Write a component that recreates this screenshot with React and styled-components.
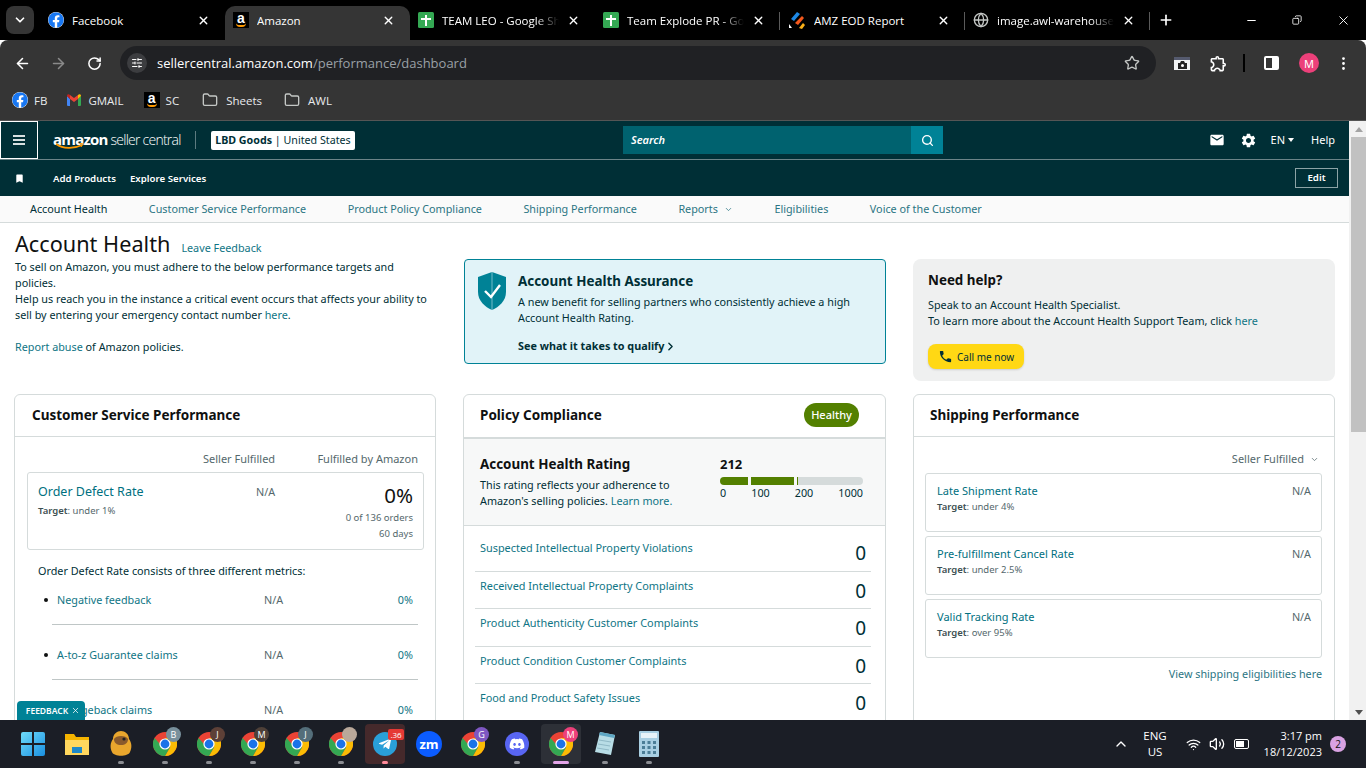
import React from "react";
import styled, { createGlobalStyle } from "styled-components";
import { ArrowLeft, ArrowRight, RotateCw, X, Plus, Minus, Star, Folder, ChevronDown, ChevronRight, ChevronUp, Search, Copy, Wifi, Volume2, SlidersHorizontal, EllipsisVertical, Globe } from "lucide-react";
import { MdEmail, MdSettings, MdBookmark, MdPhone, MdOutlineExtension } from "react-icons/md";
import { FaFacebook, FaDiscord, FaTelegramPlane } from "react-icons/fa";

const Global = createGlobalStyle`
  html, body { margin: 0; padding: 0; width: 1366px; height: 768px; overflow: hidden; background: #fff; }
  * { box-sizing: border-box; }
  body { font-family: "Noto Sans", "Open Sans", sans-serif; }
`;
const Shell = styled.div`width:1366px;height:768px;display:flex;flex-direction:column;overflow:hidden;`;

/* ---------- browser chrome ---------- */
const TabStrip = styled.div`height:40px;background:#000;display:flex;align-items:flex-start;padding:6px 0 0 6px;color:#fff;font-family:"Open Sans",sans-serif;font-size:11.5px;`;
const TabMenu = styled.div`width:28px;height:28px;border-radius:8px;background:#353535;display:flex;align-items:center;justify-content:center;margin-right:6px;`;
const Tab = styled.div`
  width:185px;height:34px;flex:none;display:flex;align-items:center;padding:0 15px 6px 8px;gap:8px;position:relative;
  ${p => p.$active ? "background:#353535;border-radius:10px 10px 0 0;" : ""}
  ${p => p.$sep ? `&::after{content:"";position:absolute;right:0;top:6px;width:1px;height:18px;background:#5a5a5a;}` : ""}
`;
const TabTitle = styled.span`flex:1;white-space:nowrap;overflow:hidden;-webkit-mask-image:${p => p.$fade ? "linear-gradient(90deg,#000 80%,transparent)" : "none"};`;
const NewTab = styled.div`width:28px;height:28px;display:flex;align-items:center;justify-content:center;margin-left:2px;`;
const WindowControls = styled.div`margin-left:auto;display:flex;height:28px;align-items:center;`;
const WindowButton = styled.div`width:46px;display:flex;align-items:center;justify-content:center;`;

const Toolbar = styled.div`height:46px;background:#353535;border-radius:8px 8px 0 0;display:flex;align-items:center;padding:0 0 0 10px;color:#e8eaed;`;
const NavIcon = styled.div`width:36px;display:flex;justify-content:center;color:${p => p.$dim ? "#8a8a8a" : "#fff"};margin-left:${p => p.$ml || 0}px;`;
const Omnibox = styled.div`width:1036px;height:34px;margin:0 0 0 8px;border-radius:17px;background:#202124;display:flex;align-items:center;padding:0 16px 0 7px;font-family:"Open Sans",sans-serif;font-size:13px;`;
const SiteInfo = styled.div`width:20px;height:20px;border-radius:50%;background:#3c3d40;display:flex;align-items:center;justify-content:center;margin-right:10px;color:#fff;`;
const Host = styled.span`color:#fff;`;
const Path = styled.span`color:#9aa0a6;`;
const OmniStar = styled.div`margin-left:auto;display:flex;color:#c4c7c5;`;
const ToolIcons = styled.div`display:flex;align-items:center;margin-left:8px;color:#fff;`;
const ToolIcon = styled.div`width:${p => p.$w || 36}px;display:flex;justify-content:center;`;
const ToolSep = styled.div`width:2px;height:18px;background:#000;margin:0 8px 0 7px;`;
const Avatar = styled.div`width:20px;height:20px;border-radius:50%;background:#ec407a;color:#fff;font-size:11px;display:flex;align-items:center;justify-content:center;margin:0 8px 0 10px;`;
const Camera = styled.div`width:16px;height:13px;background:#f1f3f4;border-top:3px solid #555a6e;display:flex;align-items:center;justify-content:center;`;
const SidePanel = styled.div`width:15px;height:14px;border:2px solid #fff;border-radius:2px;background:linear-gradient(90deg,transparent 55%,#fff 55%);`;

const Bookmarks = styled.div`height:34px;background:#353535;display:flex;align-items:center;padding:0 0 6px 12px;color:#e8eaed;font-family:"Open Sans",sans-serif;font-size:11.5px;`;
const Bookmark = styled.div`display:flex;align-items:center;gap:${p => p.$gap || 6}px;margin-right:${p => p.$mr}px;`;

const FavAmazon = styled.div`width:16px;height:16px;background:#000;color:#fff;font:700 14px/13px "Liberation Sans",sans-serif;text-align:center;position:relative;flex:none;
  &::after{content:"";position:absolute;left:3px;right:3px;bottom:1px;height:2px;border-bottom:2px solid #f90;border-radius:0 0 8px 8px;}`;

const Sheets = () => <svg width="16" height="16" viewBox="0 0 16 16"><rect width="16" height="16" rx="1.5" fill="#34a853"/><path d="M7 3h2v3h4v2H9v6H7V8H3V6h4z" fill="#fff"/></svg>;
const Gmail = () => <svg width="14" height="12" viewBox="0 0 14 12"><path d="M0 2v9a1 1 0 0 0 1 1h2V5z" fill="#4285f4"/><path d="M14 2v9a1 1 0 0 1-1 1h-2V5z" fill="#34a853"/><path d="M3 5V1l4 3 4-3v4L7 8z" fill="#ea4335"/><path d="M0 2c0-2 2-2 3-1v4z" fill="#c5221f"/><path d="M14 2c0-2-2-2-3-1v4z" fill="#fbbc04"/></svg>;
const AmzEod = () => <svg width="18" height="18" viewBox="0 0 18 18"><path d="M3 8l6-7 3 2-6 7z" fill="#1e88e5"/><path d="M7 12l7-7 2 2-6 7z" fill="#f4581c"/><path d="M11 17l4-5 2 2-3 4z" fill="#fbb017"/><path d="M1 13l3 4H1z" fill="#fff"/></svg>;
const ChromeLogo = ({ size = 24 }) => (
  <svg width={size} height={size} viewBox="0 0 24 24">
    <circle cx="12" cy="12" r="12" fill="#ea4335"/>
    <path d="M12 24A12 12 0 0 0 22.4 6H12l5.2 9z" fill="#fbbc04"/>
    <path d="M12 24l5.2-9H12a6 6 0 0 1-5.2-3L1.6 6A12 12 0 0 0 12 24z" fill="#34a853"/>
    <circle cx="12" cy="12" r="5.600" fill="#fff"/><circle cx="12" cy="12" r="4.400" fill="#1a73e8"/>
  </svg>
);

/* ---------- seller central ---------- */
const Main = styled.div`height:600px;display:flex;`;
const Page = styled.div`flex:1;min-width:0;position:relative;overflow:hidden;background:#fff;color:#002f36;font-size:10.8px;line-height:16px;`;
const Scroll = styled.div`width:17px;background:#f1f1f1;border-top:1px solid #555;display:flex;flex-direction:column;align-items:flex-end;`;
const ScrollBtn = styled.div`width:15px;height:16px;display:flex;align-items:center;justify-content:center;`;
const Tri = styled.div`width:0;height:0;border-left:4px solid transparent;border-right:4px solid transparent;${p => p.$up ? "border-bottom:5px solid #a3a3a3;" : "border-top:5px solid #505050;"}`;
const Thumb = styled.div`width:15px;height:295px;background:#c1c1c1;`;
const ScrollFill = styled.div`flex:1;`;

const TopNav = styled.div`height:40px;background:#002f36;border-top:1px solid #555;border-bottom:1px solid #6c8488;display:flex;align-items:center;color:#fff;position:relative;`;
const Burger = styled.div`width:38px;height:38px;border:1px solid #fff;display:flex;flex-direction:column;gap:2px;align-items:center;justify-content:center;flex:none;`;
const BurgerLine = styled.span`width:12px;height:2px;background:#d8e0e1;`;
const Logo = styled.div`margin-left:15px;position:relative;display:flex;align-items:baseline;gap:3px;height:24px;color:#fff;white-space:nowrap;`;
const LogoMain = styled.span`font:700 15px/22px "Open Sans",sans-serif;letter-spacing:-.8px;`;
const LogoSub = styled.span`font:300 14px/22px "Open Sans",sans-serif;letter-spacing:-.75px;`;
const Smile = styled.svg`position:absolute;left:2px;top:15px;`;
const NavDivider = styled.div`width:1px;height:18px;background:#5d7b80;margin:0 15px 0 14px;`;
const Store = styled.div`height:19px;background:#fff;color:#002f36;border-radius:2px;padding:0 4.500px;font-size:10.7px;line-height:19px;white-space:nowrap;`;
const StoreName = styled.b`font-weight:700;`;
const SearchBox = styled.div`position:absolute;left:623px;top:5px;width:320px;height:28px;display:flex;`;
const SearchInput = styled.div`flex:1;background:#00626f;color:#fff;font-style:italic;font-weight:600;font-size:11px;line-height:28px;padding-left:8px;`;
const SearchBtn = styled.div`width:32px;background:#008296;display:flex;align-items:center;justify-content:center;`;
const NavRight = styled.div`margin-left:auto;display:flex;align-items:center;padding-right:14px;font-size:11px;`;
const NavLabel = styled.span`display:flex;align-items:center;gap:3px;margin-left:${p => p.$ml}px;`;
const Caret = styled.span`width:0;height:0;border-left:3.5px solid transparent;border-right:3.5px solid transparent;border-top:4px solid #fff;`;

const ActionBar = styled.div`height:36px;background:#002f36;display:flex;align-items:center;padding:1px 11px 0 14px;color:#fff;font-size:9.7px;font-weight:600;`;
const ActionLink = styled.span`margin-left:${p => p.$ml}px;`;
const EditBtn = styled.div`margin:-1px 0 0 auto;width:43px;height:20px;border:1px solid #8ca3a6;text-align:center;line-height:18px;`;

const SubNav = styled.div`height:27px;background:#fafafa;border-bottom:1px solid #d5dbdb;display:flex;align-items:center;padding:0 0 0 30px;gap:41.5px;font-size:10.8px;white-space:nowrap;`;
const SubItem = styled.span`color:${p => p.$on ? "#002f36" : "#2b7583"};display:flex;align-items:center;gap:6px;`;

const Content = styled.div`padding:9px 14px 0;`;
const Top = styled.div`display:grid;grid-template-columns:422px 423px 422px;column-gap:27px;height:162px;`;
const Intro = styled.div`padding-left:1px;`;
const TitleRow = styled.div`display:flex;align-items:baseline;gap:11px;height:27px;`;
const H1 = styled.h1`margin:0;font-size:21.700px;font-weight:400;line-height:24px;color:#0f1111;`;
const A = styled.span`color:#0f7585;font-weight:${p => p.$bold ? 700 : 400};`;
const P = styled.p`margin:0;`;
const Gap = styled.div`height:${p => p.$h}px;`;

const Assurance = styled.div`margin:27px 0 0 1px;height:105px;background:#e1f3f8;border:1px solid #008296;border-radius:4px;display:flex;padding:12px 12px 0 12px;gap:11px;`;
const AssBody = styled.div`flex:1;`;
const H3 = styled.div`font-size:13.4px;font-weight:700;color:${p => p.$c || "#002f36"};line-height:18px;`;
const Qualify = styled.div`margin-top:12px;font-weight:700;display:flex;align-items:center;gap:0;`;

const Help = styled.div`margin-top:27px;height:122px;background:#eff0f0;border-radius:8px;padding:12px 15px;`;
const CallBtn = styled.div`margin-top:15px;width:96px;height:25px;border-radius:8px;background:#ffd814;display:flex;align-items:center;padding-left:10px;gap:4px;font-size:10px;box-shadow:0 1px 2px rgba(15,17,17,.15);`;

const Cards = styled.div`display:grid;grid-template-columns:422px 423px 422px;column-gap:27px;`;
const Card = styled.div`height:420px;border:1px solid #d5dbdb;border-radius:6px 6px 0 0;`;
const CardHead = styled.div`height:${p => p.$thick ? 44 : 42}px;border-bottom:${p => p.$thick ? "2px" : "1px"} solid #d5dbdb;display:flex;align-items:center;justify-content:space-between;padding:0 26px 2px ${p => p.$pl || 16}px;`;
const CardTitle = styled.div`font-size:13.5px;font-weight:700;color:#0f1111;`;
const Pill = styled.div`width:55px;height:24px;border-radius:12px;background:#538000;color:#fff;font-size:11px;font-weight:500;text-align:center;line-height:24px;`;

const ColHead = styled.div`display:grid;grid-template-columns:1fr 73px 142px;padding:0 17px 0 0;color:#54686c;margin-top:14px;font-size:11px;white-space:nowrap;`;
const Right = styled.div`text-align:right;padding-right:${p => p.$pr || 0}px;`;
const Box = styled.div`border:1px solid #d5dbdb;border-radius:3px;`;
const OdrBox = styled(Box)`height:78px;display:grid;grid-template-columns:218px 60px 1fr;padding:10px 10px 0 10px;margin:5px 11px 0 12px;`;
const MetricName = styled.div`color:#00707f;font-size:${p => p.$s || 12.5}px;line-height:17px;`;
const Target = styled.div`font-size:9.5px;line-height:16px;margin-top:${p => p.$mt}px;color:#54686c;`;
const TargetKey = styled.b`color:#3d4f52;font-weight:600;`;
const Big = styled.div`font-size:20.5px;line-height:27px;color:#0f1111;margin:-1px 0 1px;`;
const Small = styled.div`font-size:9.5px;color:#54686c;`;
const Muted = styled.div`color:#54686c;line-height:17px;`;
const Lead = styled.div`padding:13px 0 13px 23px;`;
const SubRow = styled.div`margin:0 17px 22px 37px;height:33px;border-bottom:${p => p.$last ? "none" : "1px solid #bfc6c6"};display:grid;grid-template-columns:207px 60px 1fr;position:relative;color:#54686c;padding-left:5px;`;
const Dot = styled.span`position:absolute;left:-8px;top:6px;width:4px;height:4px;border-radius:50%;background:#0f1111;`;

const RatingPanel = styled.div`height:87px;background:#f7f8f8;border-bottom:1px solid #d5dbdb;padding:16px 22px 0 16px;display:grid;grid-template-columns:240px 1fr;`;
const RatingScore = styled.div`font-size:13px;font-weight:700;color:#0f1111;line-height:18px;`;
const Bar = styled.div`display:flex;height:8px;margin-top:4px;gap:3px;`;
const Seg = styled.div`background:${p => p.$c};border-radius:${p => p.$r};width:${p => p.$w ? `${p.$w}px` : "auto"};flex:${p => p.$w ? "none" : 1};margin-left:${p => p.$w ? 0 : -3}px;`;
const BarLabels = styled.div`display:flex;justify-content:space-between;line-height:15px;`;
const PolicyList = styled.div`padding:8px 14px 0 11px;`;
const PolicyRow = styled.div`height:37.6px;display:flex;justify-content:space-between;border-bottom:1px solid #d5dbdb;padding:6px 5px 0 5px;color:#0f7585;font-size:10.9px;`;
const PolicyZero = styled.div`font-size:19px;line-height:24px;color:#002f36;margin-top:1px;`;

const ShipBox = styled(Box)`height:59px;margin:0 12px 4px 11px;display:flex;justify-content:space-between;padding:8px 10px 0 11px;`;
const ShipHead = styled.div`display:flex;justify-content:flex-end;align-items:center;gap:6px;padding:0 15px 0 0;margin:14px 0 6px;color:#54686c;height:16px;font-size:11px;`;
const ViewLink = styled.div`text-align:right;padding-right:12px;margin-top:8px;color:#2b7583;`;

const Feedback = styled.div`position:absolute;left:17px;top:581px;width:68px;height:19px;padding-left:4px;background:#008296;border-radius:4px 4px 0 0;color:#fff;font-size:8.5px;font-weight:600;display:flex;align-items:center;justify-content:center;gap:3px;`;

/* ---------- taskbar ---------- */
const Taskbar = styled.div`height:48px;background:#1b1e26;display:flex;align-items:center;padding-left:11px;color:#fff;font-family:"Open Sans",sans-serif;font-size:11px;`;
const Slot = styled.div`width:44px;height:40px;display:flex;align-items:center;justify-content:center;position:relative;`;
const Hilite = styled.div`width:40px;height:40px;border-radius:4px;background:${p => p.$c};display:flex;align-items:center;justify-content:center;`;
const Ind = styled.span`position:absolute;bottom:0;left:50%;transform:translateX(-50%);width:${p => p.$w || 6}px;height:3px;border-radius:2px;background:${p => p.$c || "#8b8d92"};`;
const Badge = styled.span`position:absolute;top:3px;left:${p => p.$l || 23}px;width:15px;height:15px;border-radius:50%;background:${p => p.$c};color:#fff;font-size:9px;display:flex;align-items:center;justify-content:center;`;
const TgBadge = styled.span`position:absolute;top:5px;left:25px;width:16px;height:11px;border-radius:2px;background:#e53935;color:#fff;font-size:8px;line-height:11px;text-align:center;`;
const RoundIcon = styled.div`width:${p => p.$s || 24}px;height:${p => p.$s || 24}px;border-radius:50%;background:${p => p.$c};display:flex;align-items:center;justify-content:center;color:#fff;font-weight:700;font-size:13px;`;
const Tray = styled.div`margin-left:auto;display:flex;align-items:center;height:100%;`;
const Lang = styled.div`text-align:center;line-height:16px;width:40px;margin:0 6px 0 6px;font-size:11.5px;`;
const Clock = styled.div`text-align:right;line-height:16px;width:69px;`;
const Notif = styled.div`width:16px;height:16px;border-radius:50%;background:#d9a2e2;color:#111;font-size:10px;text-align:center;line-height:16px;margin:0 20px 0 8px;`;
const TrayIcon = styled.div`width:24px;display:flex;justify-content:center;`;
const Battery = styled.div`width:15px;height:10px;border:1.5px solid #fff;border-radius:2px;padding:1px;display:flex;`;
const BatteryFill = styled.span`width:8px;background:#fff;`;
const FbIcon = styled(FaFacebook)`background:#fff;border-radius:50%;color:#1877f2;flex:none;`;
const Mirror = styled(Copy)`transform:scaleX(-1);`;
const Shield = styled.svg`flex:none;`;

const tabs = [
  { icon: <FbIcon size={16} />, title: "Facebook" },
  { icon: <FavAmazon>a</FavAmazon>, title: "Amazon", active: true },
  { icon: <Sheets />, title: "TEAM LEO - Google Sheets", fade: true },
  { icon: <Sheets />, title: "Team Explode PR - Google Sheets", fade: true, sep: true },
  { icon: <AmzEod />, title: "AMZ EOD Report", sep: true },
  { icon: <Globe size={16} color="#c4c7c5" />, title: "image.awl-warehouse.com", fade: true, sep: true },
];
const policies = ["Suspected Intellectual Property Violations", "Received Intellectual Property Complaints", "Product Authenticity Customer Complaints", "Product Condition Customer Complaints", "Food and Product Safety Issues", "Listing Policy Violations"];
const ship = [["Late Shipment Rate", "under 4%"], ["Pre-fulfillment Cancel Rate", "under 2.5%"], ["Valid Tracking Rate", "over 95%"]];
const subs = ["Negative feedback", "A-to-z Guarantee claims", "Chargeback claims"];
const chromes = [["B", "#78909c"], ["J", "#5d4037"], ["M", "#4e4038"], ["J", "#546e7a"], ["", "#b9a89a"]];

export default function App() {
  return (
    <Shell>
      <Global />
      <TabStrip>
        <TabMenu><ChevronDown size={14} strokeWidth={3} /></TabMenu>
        {tabs.map(t => (
          <Tab key={t.title} $active={t.active} $sep={t.sep}>
            {t.icon}
            <TabTitle $fade={t.fade}>{t.title}</TabTitle>
            <X size={13} strokeWidth={2.5} />
          </Tab>
        ))}
        <NewTab><Plus size={16} strokeWidth={2.5} /></NewTab>
        <WindowControls>
          <WindowButton><Minus size={13} /></WindowButton>
          <WindowButton><Mirror size={10} /></WindowButton>
          <WindowButton><X size={15} strokeWidth={1.5} /></WindowButton>
        </WindowControls>
      </TabStrip>
      <Toolbar>
        <NavIcon $ml={-6}><ArrowLeft size={17} strokeWidth={2.2} /></NavIcon>
        <NavIcon $dim><ArrowRight size={17} strokeWidth={2.2} /></NavIcon>
        <NavIcon><RotateCw size={15} strokeWidth={2.4} /></NavIcon>
        <Omnibox>
          <SiteInfo><SlidersHorizontal size={12} /></SiteInfo>
          <Host>sellercentral.amazon.com</Host><Path>/performance/dashboard</Path>
          <OmniStar><Star size={16} /></OmniStar>
        </Omnibox>
        <ToolIcons>
          <ToolIcon><Camera><svg width="9" height="8" viewBox="0 0 9 8"><path d="M0 2h2l1-2h3l1 2h2v6H0z" fill="#222"/><circle cx="4.500" cy="4.500" r="1.500" fill="#fff"/></svg></Camera></ToolIcon>
          <ToolIcon><MdOutlineExtension size={19} /></ToolIcon>
          <ToolSep />
          <ToolIcon><SidePanel /></ToolIcon>
          <Avatar>M</Avatar>
          <ToolIcon $w={32}><EllipsisVertical size={17} /></ToolIcon>
        </ToolIcons>
      </Toolbar>
      <Bookmarks>
        <Bookmark $mr={20}><FbIcon size={16} />FB</Bookmark>
        <Bookmark $mr={20} $gap={7}><Gmail />GMAIL</Bookmark>
        <Bookmark $mr={23}><FavAmazon>a</FavAmazon>SC</Bookmark>
        <Bookmark $mr={22} $gap={8}><Folder size={16} color="#c4c7c5" />Sheets</Bookmark>
        <Bookmark $mr={0} $gap={8}><Folder size={16} color="#c4c7c5" />AWL</Bookmark>
      </Bookmarks>
      <Main>
        <Page>
          <TopNav>
            <Burger><BurgerLine /><BurgerLine /><BurgerLine /></Burger>
            <Logo>
              <LogoMain>amazon</LogoMain><LogoSub>seller central</LogoSub>
              <Smile width="30" height="7" viewBox="0 0 30 7"><path d="M1 1c7 5 18 5 26 1" stroke="#f90" strokeWidth="1.6" fill="none"/><path d="M24 0l4 1-2 3" stroke="#f90" strokeWidth="1" fill="none"/></Smile>
            </Logo>
            <NavDivider />
            <Store><StoreName>LBD Goods</StoreName> | United States</Store>
            <SearchBox><SearchInput>Search</SearchInput><SearchBtn><Search size={13} color="#fff" strokeWidth={2.5} /></SearchBtn></SearchBox>
            <NavRight>
              <MdEmail size={16} />
              <NavLabel $ml={15}><MdSettings size={17} /></NavLabel>
              <NavLabel $ml={14}>EN <Caret /></NavLabel>
              <NavLabel $ml={17}>Help</NavLabel>
            </NavRight>
          </TopNav>
          <ActionBar>
            <MdBookmark size={11} />
            <ActionLink $ml={28}>Add Products</ActionLink>
            <ActionLink $ml={14}>Explore Services</ActionLink>
            <EditBtn>Edit</EditBtn>
          </ActionBar>
          <SubNav>
            <SubItem $on>Account Health</SubItem>
            <SubItem>Customer Service Performance</SubItem>
            <SubItem>Product Policy Compliance</SubItem>
            <SubItem>Shipping Performance</SubItem>
            <SubItem>Reports <ChevronDown size={9} /></SubItem>
            <SubItem>Eligibilities</SubItem>
            <SubItem>Voice of the Customer</SubItem>
          </SubNav>
          <Content>
            <Top>
              <Intro>
                <TitleRow><H1>Account Health</H1><A>Leave Feedback</A></TitleRow>
                <P>To sell on Amazon, you must adhere to the below performance targets and policies.</P>
                <P>Help us reach you in the instance a critical event occurs that affects your ability to sell by entering your emergency contact number <A>here</A>.</P>
                <Gap $h={16} />
                <P><A>Report abuse</A> of Amazon policies.</P>
              </Intro>
              <Assurance>
                <Shield width="30" height="38" viewBox="0 0 30 38">
                  <path d="M15 0l14 5v15c0 9-7 15-14 18C8 35 1 29 1 20V5z" fill="#008296"/>
                  <path d="M15 0v38" stroke="#e1f3f8" strokeWidth=".5"/>
                  <path d="M8 19l6 6 9-12" stroke="#fff" strokeWidth="2.4" fill="none"/>
                </Shield>
                <AssBody>
                  <H3>Account Health Assurance</H3>
                  <Gap $h={4} />
                  <P>A new benefit for selling partners who consistently achieve a high Account Health Rating.</P>
                  <Qualify>See what it takes to qualify <ChevronRight size={13} strokeWidth={2.5} /></Qualify>
                </AssBody>
              </Assurance>
              <Help>
                <H3 $c="#0f1111">Need help?</H3>
                <Gap $h={8} />
                <P>Speak to an Account Health Specialist.</P>
                <P>To learn more about the Account Health Support Team, click <A>here</A></P>
                <CallBtn><MdPhone size={15} color="#002f36" />Call me now</CallBtn>
              </Help>
            </Top>
            <Cards>
              <Card>
                <CardHead $pl={17}><CardTitle>Customer Service Performance</CardTitle></CardHead>
                <ColHead><span /><span>Seller Fulfilled</span><Right>Fulfilled by Amazon</Right></ColHead>
                <OdrBox>
                  <div><MetricName>Order Defect Rate</MetricName><Target $mt={3}><TargetKey>Target</TargetKey>: under 1%</Target></div>
                  <Muted>N/A</Muted>
                  <Right><Big>0%</Big><Small>0 of 136 orders</Small><Small>60 days</Small></Right>
                </OdrBox>
                <Lead>Order Defect Rate consists of three different metrics:</Lead>
                {subs.map((s, i) => (
                  <SubRow key={s} $last={i === 2}><Dot /><A>{s}</A><span>N/A</span><Right $pr={5}><A>0%</A></Right></SubRow>
                ))}
              </Card>
              <Card>
                <CardHead $thick><CardTitle>Policy Compliance</CardTitle><Pill>Healthy</Pill></CardHead>
                <RatingPanel>
                  <div><H3 $c="#0f1111">Account Health Rating</H3><Gap $h={4} /><P>This rating reflects your adherence to Amazon's selling policies. <A>Learn more.</A></P></div>
                  <div>
                    <RatingScore>212</RatingScore>
                    <Bar>
                      <Seg $c="#538000" $r="4px 0 0 4px" $w={28} />
                      <Seg $c="#538000" $r="0" $w={43} />
                      <Seg $c="#538000" $r="0" $w={1} />
                      <Seg $c="#d5dbdb" $r="0 4px 4px 0" />
                    </Bar>
                    <BarLabels><span>0</span><span>100</span><span>200</span><span>1000</span></BarLabels>
                  </div>
                </RatingPanel>
                <PolicyList>
                  {policies.map(p => <PolicyRow key={p}><span>{p}</span><PolicyZero>0</PolicyZero></PolicyRow>)}
                </PolicyList>
              </Card>
              <Card>
                <CardHead><CardTitle>Shipping Performance</CardTitle></CardHead>
                <ShipHead>Seller Fulfilled <ChevronDown size={9} /></ShipHead>
                {ship.map(([n, t]) => (
                  <ShipBox key={n}><div><MetricName $s={11}>{n}</MetricName><Target $mt={0}><TargetKey>Target</TargetKey>: {t}</Target></div><Muted>N/A</Muted></ShipBox>
                ))}
                <ViewLink>View shipping eligibilities here</ViewLink>
              </Card>
            </Cards>
          </Content>
          <Feedback>FEEDBACK <X size={9} /></Feedback>
        </Page>
        <Scroll>
          <ScrollBtn><Tri $up /></ScrollBtn>
          <Thumb />
          <ScrollFill />
          <ScrollBtn><Tri /></ScrollBtn>
        </Scroll>
      </Main>
      <Taskbar>
        <Slot><svg width="24" height="24" viewBox="0 0 24 24"><defs><linearGradient id="w" x1="0" y1="0" x2="1" y2="1"><stop offset="0" stopColor="#6fdcfa"/><stop offset="1" stopColor="#1a8fe0"/></linearGradient></defs><path d="M0 2a2 2 0 0 1 2-2h9v11H0zM13 0h9a2 2 0 0 1 2 2v9H13zM0 13h11v11H2a2 2 0 0 1-2-2zM13 13h11v9a2 2 0 0 1-2 2h-9z" fill="url(#w)"/></svg></Slot>
        <Slot><svg width="24" height="22" viewBox="0 0 24 22"><path d="M0 1h9l2 3h13v18H0z" fill="#f5b400"/><path d="M0 7h24v15H0z" fill="#ffd75e"/><rect x="7" y="14" width="10" height="6" fill="#1e88c8"/></svg></Slot>
        <Slot><svg width="24" height="26" viewBox="0 0 24 26"><path d="M4 8c0-5 4-8 8-8s8 3 8 8v0c3 4 3 9 1 13-2 5-16 5-18 0-2-4-2-9 1-13z" fill="#e9a62d"/><path d="M5 8c2-4 12-4 14 0 0 4-3 6-7 6S5 12 5 8z" fill="#8a5a2c"/><circle cx="15" cy="8" r="1.600" fill="#222"/></svg><Ind /></Slot>
        {chromes.map(([l, c], i) => (
          <Slot key={i}><ChromeLogo /><Badge $c={c}>{l}</Badge><Ind /></Slot>
        ))}
        <Slot><Hilite $c="#45292b"><RoundIcon $c="#2a9fd8"><FaTelegramPlane size={14} /></RoundIcon></Hilite><TgBadge>.36</TgBadge><Ind $c="#ff8a9a" /></Slot>
        <Slot><RoundIcon $c="#0b5cff" $s={26}>zm</RoundIcon></Slot>
        <Slot><ChromeLogo /><Badge $c="#7e57c2">G</Badge></Slot>
        <Slot><RoundIcon $c="#5865f2"><FaDiscord size={16} /></RoundIcon><Ind /></Slot>
        <Slot><Hilite $c="#2d3037"><ChromeLogo /></Hilite><Badge $c="#ec407a" $l={24}>M</Badge><Ind $c="#e3a4e8" $w={16} /></Slot>
        <Slot><svg width="22" height="26" viewBox="0 0 22 26"><path d="M6 1l15 3-4 20-16-3z" fill="#b8dde6"/><path d="M6 1l15 3-1 3-15-3z" fill="#5ea7c4"/><path d="M5 9l12 2M4 13l12 2M3 17l12 2" stroke="#8fb9c6"/></svg><Ind /></Slot>
        <Slot><svg width="20" height="26" viewBox="0 0 20 26"><rect width="20" height="26" rx="1" fill="#a9cfe2"/><rect x="2" y="2" width="16" height="5" fill="#e8f3f8"/><path d="M3 10h3v3H3zM8.500 10h3v3h-3zM14 10h3v3h-3zM3 15h3v3H3zM8.500 15h3v3h-3zM14 15h3v3h-3zM3 20h3v3H3zM8.500 20h3v3h-3zM14 20h3v3h-3z" fill="#4b7d96"/></svg><Ind /></Slot>
        <Tray>
          <ChevronUp size={16} />
          <Lang>ENG<br />US</Lang>
          <TrayIcon><Wifi size={15} /></TrayIcon>
          <TrayIcon><Volume2 size={16} /></TrayIcon>
          <TrayIcon><Battery><BatteryFill /></Battery></TrayIcon>
          <Clock>3:17 pm<br />18/12/2023</Clock>
          <Notif>2</Notif>
        </Tray>
      </Taskbar>
    </Shell>
  );
}
